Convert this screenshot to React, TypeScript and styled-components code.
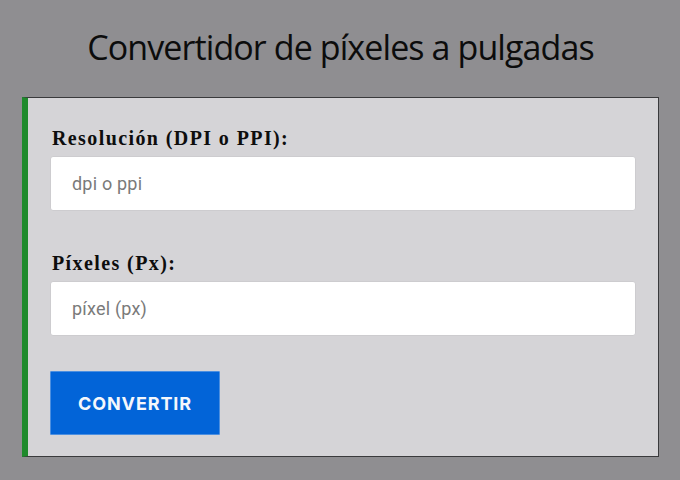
import React from 'react';
import styled, { createGlobalStyle } from 'styled-components';

const GlobalStyle = createGlobalStyle`
  html, body {
    margin: 0;
    padding: 0;
    background-color: #8f8e91;
  }
  * {
    box-sizing: border-box;
  }
`

const App = () => {
  return (
    <PageContainer>
      <GlobalStyle />
      <Title>Convertidor de píxeles a pulgadas</Title>

      <Card>
        <Field>
          <Label htmlFor='dpi'>Resolución (DPI o PPI):</Label>
          <Input id='dpi' type='text' placeholder='dpi o ppi' />
        </Field>

        <Field>
          <Label htmlFor='px'>Píxeles (Px):</Label>
          <Input id='px' type='text' placeholder='píxel (px)' />
        </Field>

        <ButtonConvert type='button'>CONVERTIR</ButtonConvert>
      </Card>
    </PageContainer>
  )
}

export default App

export const PageContainer = styled.div`
    width: 680px;
    height: 480px;
    display: flex;
    flex-direction: column;
    padding: 27px 21px 0 22px;
`

export const Title = styled.h1`
    margin: 0 0 30px;
    font-family: 'Open Sans', 'Noto Sans', sans-serif;
    font-weight: normal;
    font-size: 34px;
    line-height: 40px;
    letter-spacing: -0.9px;
    color: #0c0c0c;
    text-align: center;
`

export const Card = styled.form`
    display: flex;
    flex-direction: column;
    align-items: flex-start;
    gap: 41px;

    padding: 29px 22px 21px;
    background-color: #d5d4d7;
    border: 1px solid #3a3a3c;
    border-left: 6px solid #1f8a2c;
`

export const Field = styled.div`
    width: 100%;
    display: flex;
    flex-direction: column;
    gap: 7px;
`

export const Label = styled.label`
    padding-left: 2px;
    font-family: 'Liberation Serif', 'Times New Roman', serif;
    font-weight: bold;
    font-size: 20px;
    line-height: 22px;
    letter-spacing: 1.4px;
    color: #0d0d0d;
`

export const Input = styled.input`
    width: 100%;
    height: 55px;
    padding: 0 21px;

    border: 1px solid #cdcccf;
    border-radius: 3px;
    outline: none;
    background-color: #ffffff;

    font-family: Roboto, 'Liberation Sans', sans-serif;
    font-size: 18px;
    letter-spacing: 0.2px;
    color: #333;

    &::placeholder {
      color: #7a7a7a;
    }
`

export const ButtonConvert = styled.button`
    margin-top: -6px;
    width: 170px;
    height: 64px;

    border: 1px solid #4c8fe0;
    border-radius: 1px;
    background-color: #0264d8;
    color: #f4f7fc;
    cursor: pointer;

    font-family: Inter, Roboto, 'Liberation Sans', sans-serif;
    font-weight: bold;
    font-size: 18px;
    letter-spacing: 0.9px;
`
